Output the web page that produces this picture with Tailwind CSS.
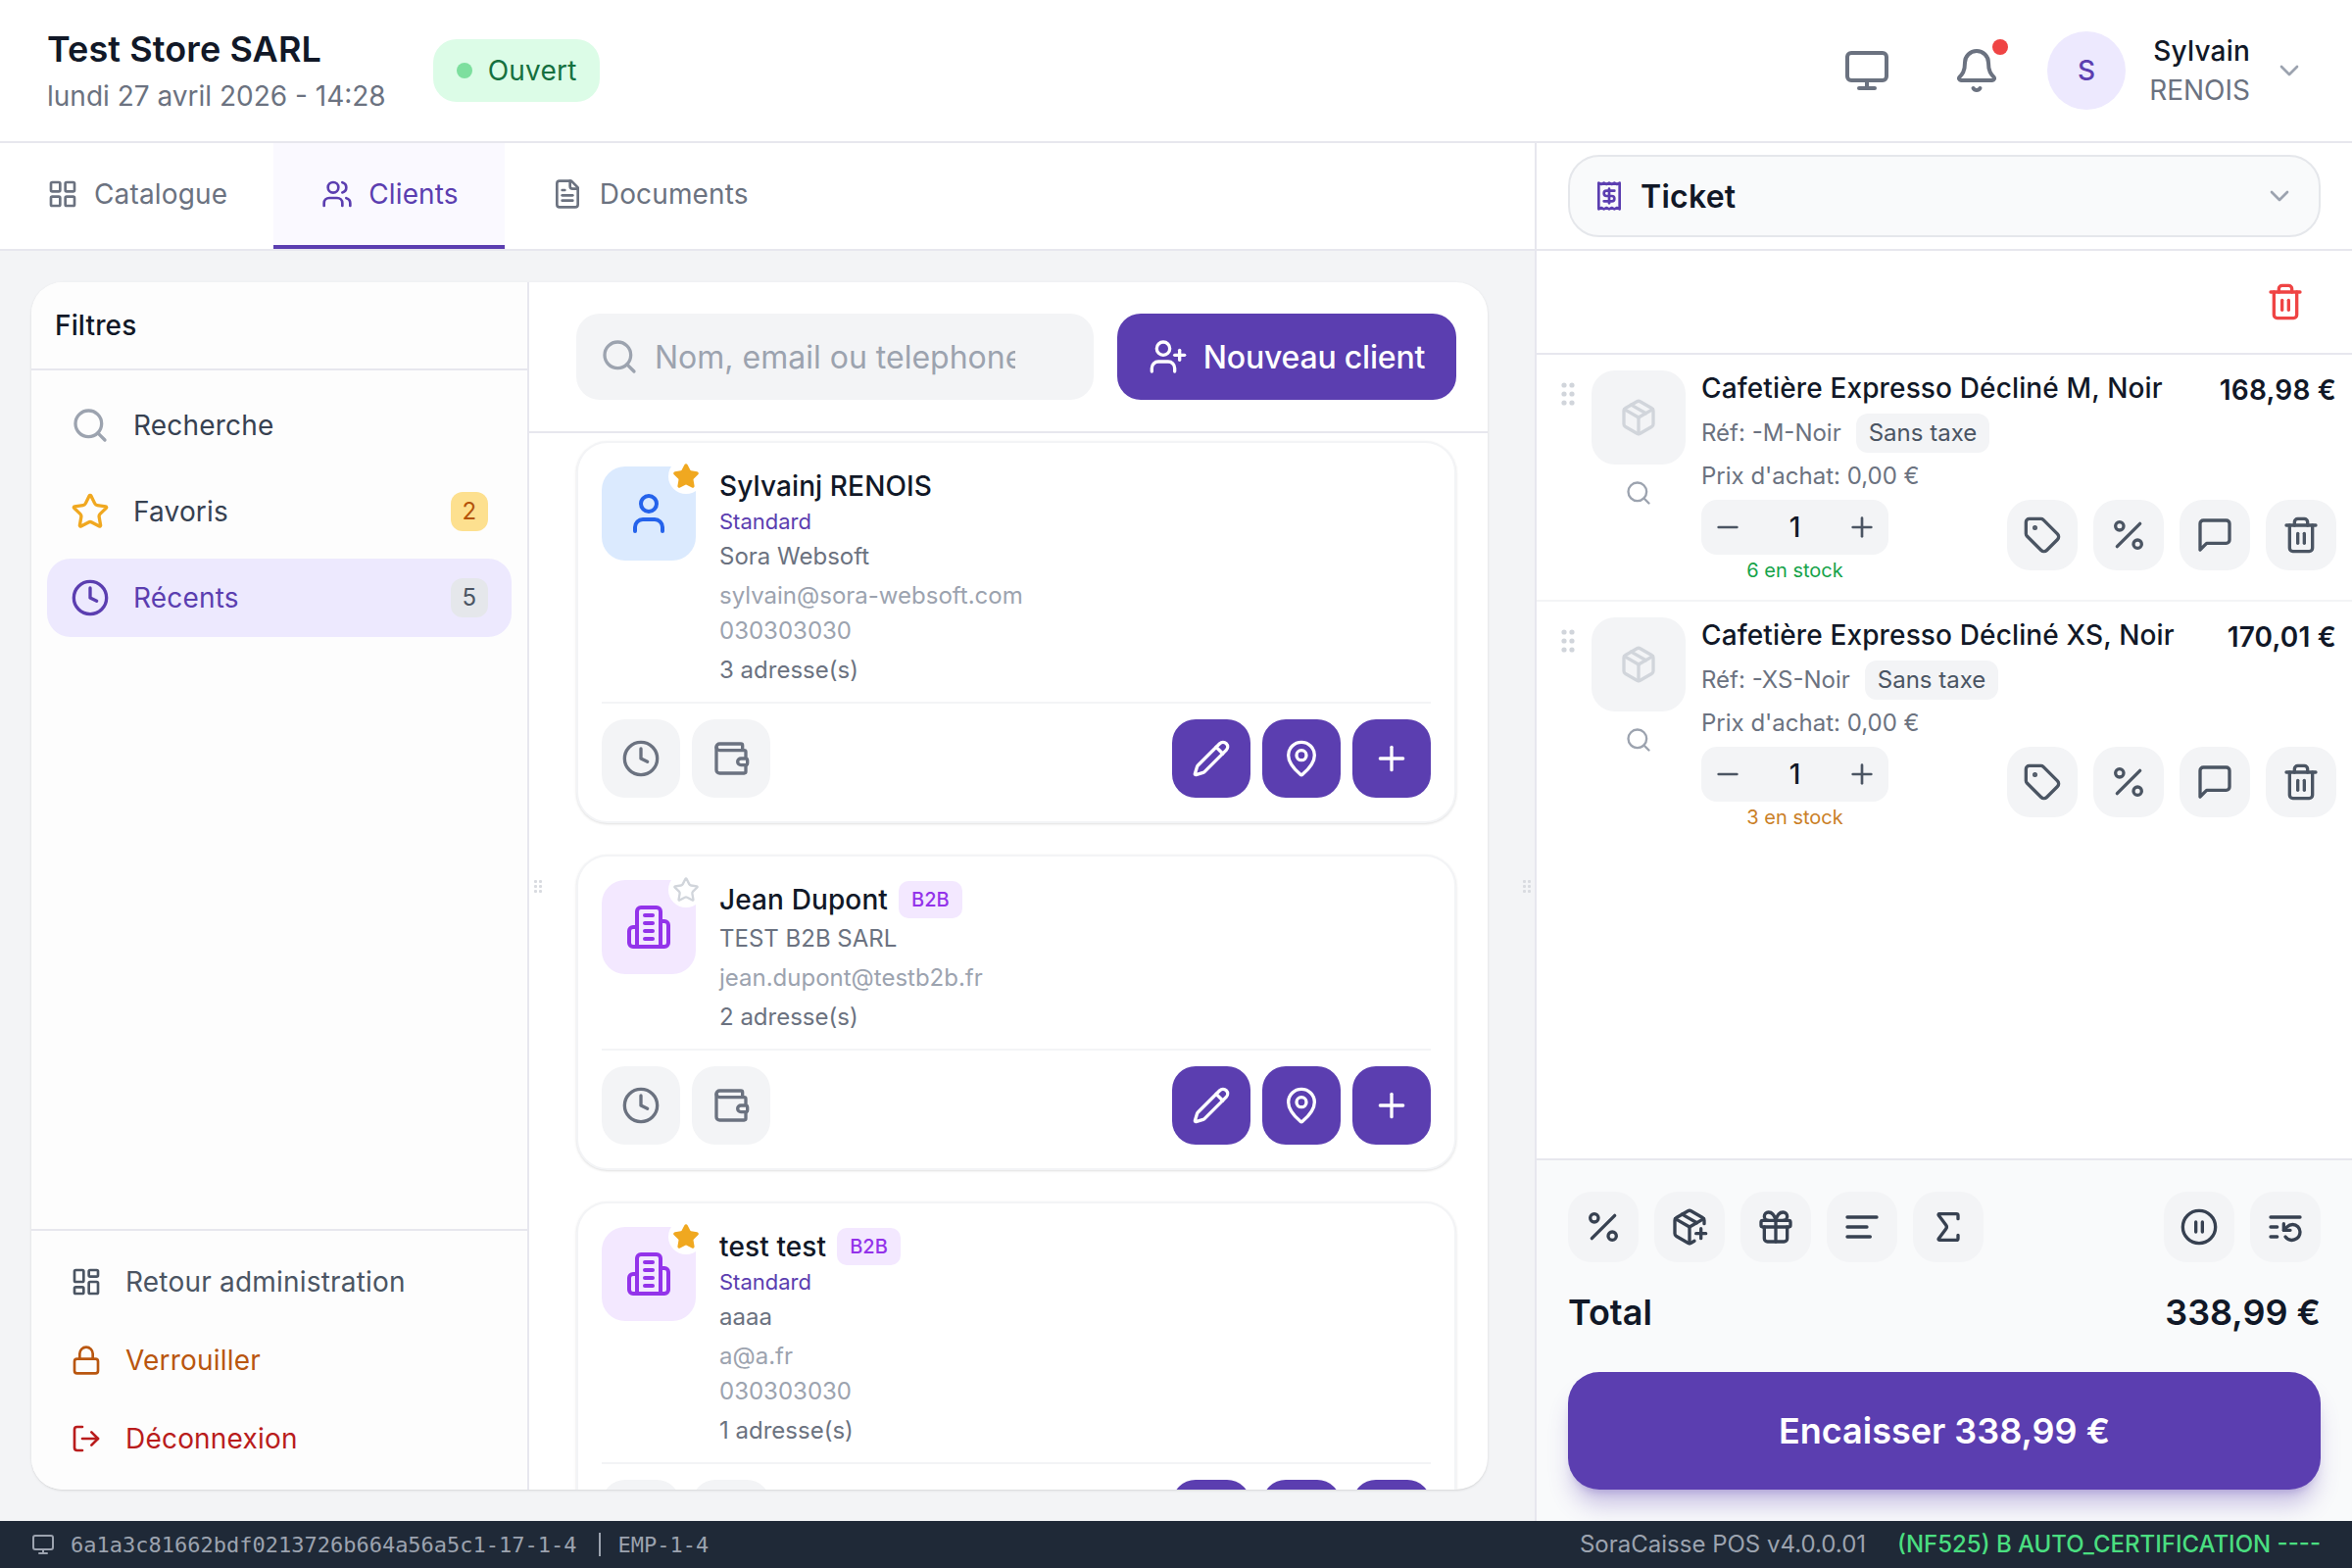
<!DOCTYPE html>
<html lang="fr">
<head>
    <meta charset="UTF-8">
    <title>SoraCaisse POS</title>
    <script src="https://cdn.jsdelivr.net/npm/@tailwindcss/browser@4"></script>
</head>
<body class="h-screen w-screen overflow-hidden flex flex-col bg-white text-[#111827] font-[family-name:Inter,sans-serif]">

    <!-- Icons -->
    <svg class="hidden">
        <symbol id="i-search" viewBox="0 0 24 24"><circle cx="11" cy="11" r="8"/><path d="m21 21-4.3-4.3"/></symbol>
        <symbol id="i-star" viewBox="0 0 24 24"><path d="M11.525 2.295a.53.53 0 0 1 .95 0l2.31 4.679a2.123 2.123 0 0 0 1.595 1.16l5.166.756a.53.53 0 0 1 .294.904l-3.736 3.638a2.123 2.123 0 0 0-.611 1.878l.882 5.14a.53.53 0 0 1-.771.56l-4.618-2.428a2.122 2.122 0 0 0-1.973 0L6.396 21.01a.53.53 0 0 1-.77-.56l.881-5.139a2.122 2.122 0 0 0-.611-1.879L2.16 9.795a.53.53 0 0 1 .294-.906l5.165-.755a2.122 2.122 0 0 0 1.597-1.16z"/></symbol>
        <symbol id="i-clock" viewBox="0 0 24 24"><circle cx="12" cy="12" r="10"/><polyline points="12 6 12 12 16 14"/></symbol>
        <symbol id="i-grid" viewBox="0 0 24 24"><rect width="7" height="7" x="3" y="3" rx="1"/><rect width="7" height="7" x="14" y="3" rx="1"/><rect width="7" height="7" x="14" y="14" rx="1"/><rect width="7" height="7" x="3" y="14" rx="1"/></symbol>
        <symbol id="i-dashboard" viewBox="0 0 24 24"><rect width="7" height="9" x="3" y="3" rx="1"/><rect width="7" height="5" x="14" y="3" rx="1"/><rect width="7" height="9" x="14" y="12" rx="1"/><rect width="7" height="5" x="3" y="16" rx="1"/></symbol>
        <symbol id="i-users" viewBox="0 0 24 24"><path d="M16 21v-2a4 4 0 0 0-4-4H6a4 4 0 0 0-4 4v2"/><path d="M16 3.128a4 4 0 0 1 0 7.744"/><path d="M22 21v-2a4 4 0 0 0-3-3.87"/><circle cx="9" cy="7" r="4"/></symbol>
        <symbol id="i-file" viewBox="0 0 24 24"><path d="M15 2H6a2 2 0 0 0-2 2v16a2 2 0 0 0 2 2h12a2 2 0 0 0 2-2V7Z"/><path d="M14 2v4a2 2 0 0 0 2 2h4"/><path d="M10 9H8"/><path d="M16 13H8"/><path d="M16 17H8"/></symbol>
        <symbol id="i-monitor" viewBox="0 0 24 24"><rect width="20" height="14" x="2" y="3" rx="2"/><line x1="8" x2="16" y1="21" y2="21"/><line x1="12" x2="12" y1="17" y2="21"/></symbol>
        <symbol id="i-bell" viewBox="0 0 24 24"><path d="M10.268 21a2 2 0 0 0 3.464 0"/><path d="M3.262 15.326A1 1 0 0 0 4 17h16a1 1 0 0 0 .74-1.673C19.41 13.956 18 12.499 18 8A6 6 0 0 0 6 8c0 4.499-1.411 5.956-2.738 7.326"/></symbol>
        <symbol id="i-chevron" viewBox="0 0 24 24"><path d="m6 9 6 6 6-6"/></symbol>
        <symbol id="i-receipt" viewBox="0 0 24 24"><path d="M4 2v20l2-1 2 1 2-1 2 1 2-1 2 1 2-1 2 1V2l-2 1-2-1-2 1-2-1-2 1-2-1-2 1Z"/><path d="M16 8h-6a2 2 0 1 0 0 4h4a2 2 0 1 1 0 4H8"/><path d="M12 17.5v-11"/></symbol>
        <symbol id="i-trash" viewBox="0 0 24 24"><path d="M10 11v6"/><path d="M14 11v6"/><path d="M19 6v14a2 2 0 0 1-2 2H7a2 2 0 0 1-2-2V6"/><path d="M3 6h18"/><path d="M8 6V4a2 2 0 0 1 2-2h4a2 2 0 0 1 2 2v2"/></symbol>
        <symbol id="i-package" viewBox="0 0 24 24"><path d="M11 21.73a2 2 0 0 0 2 0l7-4A2 2 0 0 0 21 16V8a2 2 0 0 0-1-1.73l-7-4a2 2 0 0 0-2 0l-7 4A2 2 0 0 0 3 8v8a2 2 0 0 0 1 1.73z"/><path d="M12 22V12"/><polyline points="3.29 7 12 12 20.71 7"/><path d="m7.5 4.27 9 5.15"/></symbol>
        <symbol id="i-package-plus" viewBox="0 0 24 24"><path d="M16 16h6"/><path d="M19 13v6"/><path d="M21 10V8a2 2 0 0 0-1-1.73l-7-4a2 2 0 0 0-2 0l-7 4A2 2 0 0 0 3 8v8a2 2 0 0 0 1 1.73l7 4a2 2 0 0 0 2 0l2-1.14"/><path d="m7.5 4.27 9 5.15"/><polyline points="3.29 7 12 12 20.71 7"/><line x1="12" x2="12" y1="22" y2="12"/></symbol>
        <symbol id="i-tag" viewBox="0 0 24 24"><path d="M12.586 2.586A2 2 0 0 0 11.172 2H4a2 2 0 0 0-2 2v7.172a2 2 0 0 0 .586 1.414l8.704 8.704a2.426 2.426 0 0 0 3.42 0l6.58-6.58a2.426 2.426 0 0 0 0-3.42z"/><circle cx="7.5" cy="7.5" r=".5" fill="currentColor"/></symbol>
        <symbol id="i-percent" viewBox="0 0 24 24"><line x1="19" x2="5" y1="5" y2="19"/><circle cx="6.5" cy="6.5" r="2.5"/><circle cx="17.5" cy="17.5" r="2.5"/></symbol>
        <symbol id="i-message" viewBox="0 0 24 24"><path d="M21 15a2 2 0 0 1-2 2H7l-4 4V5a2 2 0 0 1 2-2h14a2 2 0 0 1 2 2z"/></symbol>
        <symbol id="i-gift" viewBox="0 0 24 24"><rect x="3" y="8" width="18" height="4" rx="1"/><path d="M12 8v13"/><path d="M19 12v7a2 2 0 0 1-2 2H7a2 2 0 0 1-2-2v-7"/><path d="M7.5 8a2.5 2.5 0 0 1 0-5A4.8 8 0 0 1 12 8a4.8 8 0 0 1 4.5-5 2.5 2.5 0 0 1 0 5"/></symbol>
        <symbol id="i-align" viewBox="0 0 24 24"><path d="M15 12H3"/><path d="M17 18H3"/><path d="M21 6H3"/></symbol>
        <symbol id="i-sigma" viewBox="0 0 24 24"><path d="M18 7V5a1 1 0 0 0-1-1H6.5a.5.5 0 0 0-.4.8l4.5 6a2 2 0 0 1 0 2.4l-4.5 6a.5.5 0 0 0 .4.8H17a1 1 0 0 0 1-1v-2"/></symbol>
        <symbol id="i-pause" viewBox="0 0 24 24"><circle cx="12" cy="12" r="10"/><line x1="10" x2="10" y1="15" y2="9"/><line x1="14" x2="14" y1="15" y2="9"/></symbol>
        <symbol id="i-restart" viewBox="0 0 24 24"><path d="M21 6H3"/><path d="M7 12H3"/><path d="M7 18H3"/><path d="M12 18a5 5 0 0 0 9-3 4.5 4.5 0 0 0-4.5-4.5c-1.33 0-2.54.54-3.41 1.41L11 14"/><path d="M11 10v4h4"/></symbol>
        <symbol id="i-user-plus" viewBox="0 0 24 24"><path d="M16 21v-2a4 4 0 0 0-4-4H6a4 4 0 0 0-4 4v2"/><circle cx="9" cy="7" r="4"/><line x1="19" x2="19" y1="8" y2="14"/><line x1="22" x2="16" y1="11" y2="11"/></symbol>
        <symbol id="i-user" viewBox="0 0 24 24"><path d="M19 21v-2a4 4 0 0 0-4-4H9a4 4 0 0 0-4 4v2"/><circle cx="12" cy="7" r="4"/></symbol>
        <symbol id="i-building" viewBox="0 0 24 24"><path d="M6 22V4a2 2 0 0 1 2-2h8a2 2 0 0 1 2 2v18Z"/><path d="M6 12H4a2 2 0 0 0-2 2v6a2 2 0 0 0 2 2h2"/><path d="M18 9h2a2 2 0 0 1 2 2v9a2 2 0 0 1-2 2h-2"/><path d="M10 6h4"/><path d="M10 10h4"/><path d="M10 14h4"/><path d="M10 18h4"/></symbol>
        <symbol id="i-pencil" viewBox="0 0 24 24"><path d="M21.174 6.812a1 1 0 0 0-3.986-3.987L3.842 16.174a2 2 0 0 0-.5.83l-1.321 4.352a.5.5 0 0 0 .623.622l4.353-1.32a2 2 0 0 0 .83-.497z"/><path d="m15 5 4 4"/></symbol>
        <symbol id="i-pin" viewBox="0 0 24 24"><path d="M20 10c0 4.993-5.539 10.193-7.399 11.799a1 1 0 0 1-1.202 0C9.539 20.193 4 14.993 4 10a8 8 0 0 1 16 0"/><circle cx="12" cy="10" r="3"/></symbol>
        <symbol id="i-plus" viewBox="0 0 24 24"><path d="M5 12h14"/><path d="M12 5v14"/></symbol>
        <symbol id="i-minus" viewBox="0 0 24 24"><path d="M5 12h14"/></symbol>
        <symbol id="i-wallet" viewBox="0 0 24 24"><path d="M19 7V4a1 1 0 0 0-1-1H5a2 2 0 0 0 0 4h15a1 1 0 0 1 1 1v4h-3a2 2 0 0 0 0 4h3a1 1 0 0 0 1-1v-2a1 1 0 0 0-1-1"/><path d="M3 5v14a2 2 0 0 0 2 2h15a1 1 0 0 0 1-1v-4"/></symbol>
        <symbol id="i-lock" viewBox="0 0 24 24"><rect width="18" height="11" x="3" y="11" rx="2"/><path d="M7 11V7a5 5 0 0 1 10 0v4"/></symbol>
        <symbol id="i-logout" viewBox="0 0 24 24"><path d="M9 21H5a2 2 0 0 1-2-2V5a2 2 0 0 1 2-2h4"/><polyline points="16 17 21 12 16 7"/><line x1="21" x2="9" y1="12" y2="12"/></symbol>
        <symbol id="i-grip" viewBox="0 0 14 24"><circle cx="3" cy="3" r="2.6"/><circle cx="11" cy="3" r="2.6"/><circle cx="3" cy="12" r="2.6"/><circle cx="11" cy="12" r="2.6"/><circle cx="3" cy="21" r="2.6"/><circle cx="11" cy="21" r="2.6"/></symbol>
        <symbol id="i-handle" viewBox="0 0 8 14"><rect x="0" y="0" width="3" height="3" rx="1"/><rect x="5" y="0" width="3" height="3" rx="1"/><rect x="0" y="5" width="3" height="3" rx="1"/><rect x="5" y="5" width="3" height="3" rx="1"/><rect x="0" y="10" width="3" height="3" rx="1"/><rect x="5" y="10" width="3" height="3" rx="1"/></symbol>
    </svg>

    <!-- Header -->
    <header class="h-[146px] shrink-0 border-b-2 border-[#e7e7ee] flex items-center pl-[48px] pr-[48px]">
        <div>
            <h1 class="text-[36px] leading-[48px] font-semibold tracking-[0.1px]">Test Store SARL</h1>
            <p class="text-[28px] leading-[40px] text-[#6b7280] mt-[4px]">lundi 27 avril 2026 - 14:28</p>
        </div>
        <div class="ml-[48px] h-[64px] w-[170px] rounded-[24px] bg-[#dcfce7] flex items-center pl-[24px] gap-[16px]">
            <span class="w-[16px] h-[16px] rounded-full bg-[#7ddf9e]"></span>
            <span class="text-[28px] tracking-[0.2px] text-[#15703f]">Ouvert</span>
        </div>
        <div class="ml-auto flex items-center">
            <svg class="w-[48px] h-[48px] text-[#6b7280]" fill="none" stroke="currentColor" stroke-width="2" stroke-linecap="round" stroke-linejoin="round"><use href="#i-monitor"/></svg>
            <div class="relative ml-[64px]">
                <svg class="w-[48px] h-[48px] text-[#6b7280]" fill="none" stroke="currentColor" stroke-width="2" stroke-linecap="round" stroke-linejoin="round"><use href="#i-bell"/></svg>
                <span class="absolute top-[-8px] right-[-8px] w-[16px] h-[16px] rounded-full bg-[#ef4444]"></span>
            </div>
            <div class="ml-[48px] w-[80px] h-[80px] rounded-full bg-[#ede9fe] flex items-center justify-center text-[28px] font-medium text-[#5b3eb0]">S</div>
            <div class="ml-[24px] text-right">
                <p class="text-[28px] leading-[40px] font-medium tracking-[0.2px]">Sylvain</p>
                <p class="text-[28px] leading-[40px] text-[#6b7280]">RENOIS</p>
            </div>
            <svg class="ml-[24px] w-[32px] h-[32px] text-[#9ca3af]" fill="none" stroke="currentColor" stroke-width="2" stroke-linecap="round" stroke-linejoin="round"><use href="#i-chevron"/></svg>
        </div>
    </header>

    <main class="flex-1 flex min-h-0">

        <!-- Left area -->
        <div class="w-[1566px] flex flex-col min-h-0">
            <nav class="h-[110px] shrink-0 border-b-2 border-[#e7e7ee] flex">
                <a class="pl-[48px] pr-[47px] flex items-center gap-[16px] text-[28px] tracking-[0.15px] text-[#6b7280] border-b-4 border-transparent">
                    <svg class="w-[32px] h-[32px]" fill="none" stroke="currentColor" stroke-width="2" stroke-linecap="round" stroke-linejoin="round"><use href="#i-grid"/></svg>
                    Catalogue
                </a>
                <a class="pl-[49px] pr-[47px] flex items-center gap-[16px] text-[28px] tracking-[0.15px] text-[#5b3eb0] bg-[#faf9ff] border-b-4 border-[#5b3eb0]">
                    <svg class="w-[32px] h-[32px]" fill="none" stroke="currentColor" stroke-width="2" stroke-linecap="round" stroke-linejoin="round"><use href="#i-users"/></svg>
                    Clients
                </a>
                <a class="px-[48px] flex items-center gap-[17px] text-[28px] tracking-[0.15px] text-[#6b7280] border-b-4 border-transparent">
                    <svg class="w-[32px] h-[32px]" fill="none" stroke="currentColor" stroke-width="2" stroke-linecap="round" stroke-linejoin="round"><use href="#i-file"/></svg>
                    Documents
                </a>
            </nav>

            <div class="relative flex-1 min-h-0 bg-[#f3f4f6] pl-[32px] pr-[48px] py-[32px]">
                <div class="h-full flex bg-white rounded-[32px] overflow-hidden shadow-sm">

                    <!-- Filters -->
                    <aside class="w-[508px] shrink-0 bg-[#fdfdfd] border-r-2 border-[#e7e7ee] flex flex-col">
                        <div class="h-[90px] shrink-0 border-b-2 border-[#e7e7ee] flex items-center px-[24px] text-[28px] font-medium tracking-[0.15px]">Filtres</div>
                        <div class="flex-1 pt-[16px] px-[16px] flex flex-col gap-[8px]">
                            <div class="h-[80px] rounded-[24px] px-[24px] flex items-center gap-[24px] text-[28px] tracking-[0.18px] text-[#374151]">
                                <svg class="w-[40px] h-[40px] text-[#9ca3af]" fill="none" stroke="currentColor" stroke-width="2" stroke-linecap="round" stroke-linejoin="round"><use href="#i-search"/></svg>
                                Recherche
                            </div>
                            <div class="h-[80px] rounded-[24px] px-[24px] flex items-center gap-[24px] text-[28px] tracking-[0.18px] text-[#374151]">
                                <svg class="w-[40px] h-[40px] text-[#f0a820]" fill="none" stroke="currentColor" stroke-width="2" stroke-linecap="round" stroke-linejoin="round"><use href="#i-star"/></svg>
                                Favoris
                                <span class="ml-auto w-[38px] h-[40px] rounded-[12px] bg-[#fde08f] text-[#b45309] text-[24px] flex items-center justify-center">2</span>
                            </div>
                            <div class="h-[80px] rounded-[24px] px-[24px] flex items-center gap-[24px] text-[28px] tracking-[0.18px] bg-[#ede9fe] text-[#5b3eb0]">
                                <svg class="w-[40px] h-[40px]" fill="none" stroke="currentColor" stroke-width="2" stroke-linecap="round" stroke-linejoin="round"><use href="#i-clock"/></svg>
                                Récents
                                <span class="ml-auto w-[38px] h-[40px] rounded-[12px] bg-[#e5e7eb] text-[#4b5563] text-[24px] flex items-center justify-center">5</span>
                            </div>
                        </div>
                        <div class="shrink-0 border-t-2 border-[#e7e7ee] h-[266px] pt-[12px] px-[40px] flex flex-col text-[28px] tracking-[0.2px]">
                            <div class="h-[80px] flex items-center gap-[24px] text-[#4b5563]">
                                <svg class="w-[32px] h-[32px]" fill="none" stroke="currentColor" stroke-width="2" stroke-linecap="round" stroke-linejoin="round"><use href="#i-dashboard"/></svg>
                                Retour administration
                            </div>
                            <div class="h-[80px] flex items-center gap-[24px] text-[#b9560f]">
                                <svg class="w-[32px] h-[32px]" fill="none" stroke="currentColor" stroke-width="2" stroke-linecap="round" stroke-linejoin="round"><use href="#i-lock"/></svg>
                                Verrouiller
                            </div>
                            <div class="h-[80px] flex items-center gap-[24px] text-[#b91c1c]">
                                <svg class="w-[32px] h-[32px]" fill="none" stroke="currentColor" stroke-width="2" stroke-linecap="round" stroke-linejoin="round"><use href="#i-logout"/></svg>
                                Déconnexion
                            </div>
                        </div>
                    </aside>

                    <!-- Clients -->
                    <section class="flex-1 min-w-0 flex flex-col">
                        <div class="shrink-0 h-[154px] border-b-2 border-[#e7e7ee] pt-[32px] pl-[48px] pr-[32px] flex gap-[24px] items-start">
                            <div class="relative w-[528px] h-[88px]">
                                <svg class="absolute left-[24px] top-[24px] w-[40px] h-[40px] text-[#9ca3af]" fill="none" stroke="currentColor" stroke-width="2" stroke-linecap="round" stroke-linejoin="round"><use href="#i-search"/></svg>
                                <input type="text" placeholder="Nom, email ou telephone" class="w-full h-full rounded-[24px] bg-[#f3f4f6] pl-[80px] pr-[80px] text-[32px] placeholder:text-[#9ca3af] outline-none">
                            </div>
                            <button class="w-[346px] h-[88px] rounded-[24px] bg-[#5b3eb0] text-white text-[32px] font-medium tracking-[-0.2px] flex items-center justify-center gap-[16px]">
                                <svg class="w-[40px] h-[40px]" fill="none" stroke="currentColor" stroke-width="2" stroke-linecap="round" stroke-linejoin="round"><use href="#i-user-plus"/></svg>
                                <span class="mt-[1px]">Nouveau client</span>
                            </button>
                        </div>

                        <div class="flex-1 min-h-0 overflow-hidden pt-[8px] pl-[48px] pr-[32px] flex flex-col gap-[32px]">

                            <article class="shrink-0 border-2 border-[#f3f4f6] rounded-[32px] bg-white p-[24px] shadow-sm">
                                <div class="flex gap-[24px]">
                                    <div class="relative w-[96px] h-[96px] shrink-0 rounded-[24px] bg-[#dbeafe] flex items-center justify-center text-[#2563eb]">
                                        <svg class="w-[48px] h-[48px]" fill="none" stroke="currentColor" stroke-width="2" stroke-linecap="round" stroke-linejoin="round"><use href="#i-user"/></svg>
                                        <span class="absolute top-[-8px] right-[-8px] w-[36px] h-[36px] rounded-full bg-white flex items-center justify-center text-[#f0a820]">
                                            <svg class="w-[28px] h-[28px]" fill="currentColor" stroke="currentColor" stroke-width="2" stroke-linecap="round" stroke-linejoin="round"><use href="#i-star"/></svg>
                                        </span>
                                    </div>
                                    <div>
                                        <p class="text-[28px] leading-[40px] font-medium tracking-[0.12px]">Sylvainj RENOIS</p>
                                        <p class="text-[22px] leading-[32px] text-[#5b3eb0]">Standard</p>
                                        <p class="text-[24px] leading-[32px] text-[#6b7280] mt-[4px]">Sora Websoft</p>
                                        <p class="text-[24px] leading-[32px] text-[#9ca3af] mt-[8px]">sylvain@sora-websoft.com</p>
                                        <p class="text-[24px] leading-[32px] text-[#9ca3af] mt-[4px]">030303030</p>
                                        <p class="text-[24px] leading-[32px] text-[#6b7280] mt-[8px]">3 adresse(s)</p>
                                    </div>
                                </div>
                                <div class="border-t-2 border-[#f3f4f6] mt-[16px] pt-[16px] flex gap-[12px]">
                                    <button class="w-[80px] h-[80px] rounded-[24px] bg-[#f3f4f6] text-[#6b7280] flex items-center justify-center"><svg class="w-[40px] h-[40px]" fill="none" stroke="currentColor" stroke-width="2" stroke-linecap="round" stroke-linejoin="round"><use href="#i-clock"/></svg></button>
                                    <button class="w-[80px] h-[80px] rounded-[24px] bg-[#f3f4f6] text-[#6b7280] flex items-center justify-center"><svg class="w-[40px] h-[40px]" fill="none" stroke="currentColor" stroke-width="2" stroke-linecap="round" stroke-linejoin="round"><use href="#i-wallet"/></svg></button>
                                    <button class="ml-auto w-[80px] h-[80px] rounded-[24px] bg-[#5b3eb0] text-white flex items-center justify-center"><svg class="w-[40px] h-[40px]" fill="none" stroke="currentColor" stroke-width="2" stroke-linecap="round" stroke-linejoin="round"><use href="#i-pencil"/></svg></button>
                                    <button class="w-[80px] h-[80px] rounded-[24px] bg-[#5b3eb0] text-white flex items-center justify-center"><svg class="w-[40px] h-[40px]" fill="none" stroke="currentColor" stroke-width="2" stroke-linecap="round" stroke-linejoin="round"><use href="#i-pin"/></svg></button>
                                    <button class="w-[80px] h-[80px] rounded-[24px] bg-[#5b3eb0] text-white flex items-center justify-center"><svg class="w-[40px] h-[40px]" fill="none" stroke="currentColor" stroke-width="2" stroke-linecap="round" stroke-linejoin="round"><use href="#i-plus"/></svg></button>
                                </div>
                            </article>

                            <article class="shrink-0 border-2 border-[#f3f4f6] rounded-[32px] bg-white p-[24px] shadow-sm">
                                <div class="flex gap-[24px]">
                                    <div class="relative w-[96px] h-[96px] shrink-0 rounded-[24px] bg-[#f3e8ff] flex items-center justify-center text-[#9333ea]">
                                        <svg class="w-[48px] h-[48px]" fill="none" stroke="currentColor" stroke-width="2" stroke-linecap="round" stroke-linejoin="round"><use href="#i-building"/></svg>
                                        <span class="absolute top-[-8px] right-[-8px] w-[36px] h-[36px] rounded-full bg-white flex items-center justify-center text-[#d1d5db]">
                                            <svg class="w-[28px] h-[28px]" fill="none" stroke="currentColor" stroke-width="2" stroke-linecap="round" stroke-linejoin="round"><use href="#i-star"/></svg>
                                        </span>
                                    </div>
                                    <div>
                                        <div class="flex items-center gap-[11px]">
                                            <p class="text-[28px] leading-[40px] font-medium tracking-[0.12px]">Jean Dupont</p>
                                            <span class="h-[38px] px-[13px] rounded-[10px] bg-[#f3e8ff] text-[#9333ea] text-[20px] font-medium flex items-center">B2B</span>
                                        </div>
                                        <p class="text-[24px] leading-[32px] text-[#6b7280] mt-[4px]">TEST B2B SARL</p>
                                        <p class="text-[24px] leading-[32px] text-[#9ca3af] mt-[8px]">jean.dupont@testb2b.fr</p>
                                        <p class="text-[24px] leading-[32px] text-[#6b7280] mt-[8px]">2 adresse(s)</p>
                                    </div>
                                </div>
                                <div class="border-t-2 border-[#f3f4f6] mt-[16px] pt-[16px] flex gap-[12px]">
                                    <button class="w-[80px] h-[80px] rounded-[24px] bg-[#f3f4f6] text-[#6b7280] flex items-center justify-center"><svg class="w-[40px] h-[40px]" fill="none" stroke="currentColor" stroke-width="2" stroke-linecap="round" stroke-linejoin="round"><use href="#i-clock"/></svg></button>
                                    <button class="w-[80px] h-[80px] rounded-[24px] bg-[#f3f4f6] text-[#6b7280] flex items-center justify-center"><svg class="w-[40px] h-[40px]" fill="none" stroke="currentColor" stroke-width="2" stroke-linecap="round" stroke-linejoin="round"><use href="#i-wallet"/></svg></button>
                                    <button class="ml-auto w-[80px] h-[80px] rounded-[24px] bg-[#5b3eb0] text-white flex items-center justify-center"><svg class="w-[40px] h-[40px]" fill="none" stroke="currentColor" stroke-width="2" stroke-linecap="round" stroke-linejoin="round"><use href="#i-pencil"/></svg></button>
                                    <button class="w-[80px] h-[80px] rounded-[24px] bg-[#5b3eb0] text-white flex items-center justify-center"><svg class="w-[40px] h-[40px]" fill="none" stroke="currentColor" stroke-width="2" stroke-linecap="round" stroke-linejoin="round"><use href="#i-pin"/></svg></button>
                                    <button class="w-[80px] h-[80px] rounded-[24px] bg-[#5b3eb0] text-white flex items-center justify-center"><svg class="w-[40px] h-[40px]" fill="none" stroke="currentColor" stroke-width="2" stroke-linecap="round" stroke-linejoin="round"><use href="#i-plus"/></svg></button>
                                </div>
                            </article>

                            <article class="shrink-0 border-2 border-[#f3f4f6] rounded-[32px] bg-white p-[24px] shadow-sm">
                                <div class="flex gap-[24px]">
                                    <div class="relative w-[96px] h-[96px] shrink-0 rounded-[24px] bg-[#f3e8ff] flex items-center justify-center text-[#9333ea]">
                                        <svg class="w-[48px] h-[48px]" fill="none" stroke="currentColor" stroke-width="2" stroke-linecap="round" stroke-linejoin="round"><use href="#i-building"/></svg>
                                        <span class="absolute top-[-8px] right-[-8px] w-[36px] h-[36px] rounded-full bg-white flex items-center justify-center text-[#f0a820]">
                                            <svg class="w-[28px] h-[28px]" fill="currentColor" stroke="currentColor" stroke-width="2" stroke-linecap="round" stroke-linejoin="round"><use href="#i-star"/></svg>
                                        </span>
                                    </div>
                                    <div>
                                        <div class="flex items-center gap-[11px]">
                                            <p class="text-[28px] leading-[40px] font-medium tracking-[0.12px]">test test</p>
                                            <span class="h-[38px] px-[13px] rounded-[10px] bg-[#f3e8ff] text-[#9333ea] text-[20px] font-medium flex items-center">B2B</span>
                                        </div>
                                        <p class="text-[22px] leading-[32px] text-[#5b3eb0]">Standard</p>
                                        <p class="text-[24px] leading-[32px] text-[#6b7280] mt-[4px]">aaaa</p>
                                        <p class="text-[24px] leading-[32px] text-[#9ca3af] mt-[8px]">a@a.fr</p>
                                        <p class="text-[24px] leading-[32px] text-[#9ca3af] mt-[4px]">030303030</p>
                                        <p class="text-[24px] leading-[32px] text-[#6b7280] mt-[8px]">1 adresse(s)</p>
                                    </div>
                                </div>
                                <div class="border-t-2 border-[#f3f4f6] mt-[16px] pt-[16px] flex gap-[12px]">
                                    <button class="w-[80px] h-[80px] rounded-[24px] bg-[#f3f4f6] text-[#6b7280] flex items-center justify-center"><svg class="w-[40px] h-[40px]" fill="none" stroke="currentColor" stroke-width="2" stroke-linecap="round" stroke-linejoin="round"><use href="#i-clock"/></svg></button>
                                    <button class="w-[80px] h-[80px] rounded-[24px] bg-[#f3f4f6] text-[#6b7280] flex items-center justify-center"><svg class="w-[40px] h-[40px]" fill="none" stroke="currentColor" stroke-width="2" stroke-linecap="round" stroke-linejoin="round"><use href="#i-wallet"/></svg></button>
                                    <button class="ml-auto w-[80px] h-[80px] rounded-[24px] bg-[#5b3eb0] text-white flex items-center justify-center"><svg class="w-[40px] h-[40px]" fill="none" stroke="currentColor" stroke-width="2" stroke-linecap="round" stroke-linejoin="round"><use href="#i-pencil"/></svg></button>
                                    <button class="w-[80px] h-[80px] rounded-[24px] bg-[#5b3eb0] text-white flex items-center justify-center"><svg class="w-[40px] h-[40px]" fill="none" stroke="currentColor" stroke-width="2" stroke-linecap="round" stroke-linejoin="round"><use href="#i-pin"/></svg></button>
                                    <button class="w-[80px] h-[80px] rounded-[24px] bg-[#5b3eb0] text-white flex items-center justify-center"><svg class="w-[40px] h-[40px]" fill="none" stroke="currentColor" stroke-width="2" stroke-linecap="round" stroke-linejoin="round"><use href="#i-plus"/></svg></button>
                                </div>
                            </article>
                        </div>
                    </section>
                </div>

                <!-- Resize handles -->
                <svg class="absolute left-[545px] top-[642px] w-[8px] h-[14px] text-[#d9dbe0]" fill="currentColor"><use href="#i-handle"/></svg>
                <svg class="absolute left-[1554px] top-[642px] w-[8px] h-[14px] text-[#d9dbe0]" fill="currentColor"><use href="#i-handle"/></svg>
            </div>
        </div>

        <!-- Ticket -->
        <div class="flex-1 min-w-0 border-l-2 border-[#e7e7ee] flex flex-col bg-white">
            <div class="h-[110px] shrink-0 border-b-2 border-[#e7e7ee] pt-[12px] px-[32px]">
                <div class="h-[84px] rounded-[32px] border-2 border-[#e5e7eb] bg-[#f9fafb] px-[24px] flex items-center gap-[16px]">
                    <svg class="w-[32px] h-[32px] text-[#5b3eb0]" fill="none" stroke="currentColor" stroke-width="2" stroke-linecap="round" stroke-linejoin="round"><use href="#i-receipt"/></svg>
                    <span class="mt-[2px] text-[32px] font-semibold tracking-[0.25px]">Ticket</span>
                    <svg class="ml-auto w-[32px] h-[32px] text-[#9ca3af]" fill="none" stroke="currentColor" stroke-width="2" stroke-linecap="round" stroke-linejoin="round"><use href="#i-chevron"/></svg>
                </div>
            </div>
            <div class="h-[106px] shrink-0 border-b-2 border-[#e7e7ee] flex items-center justify-end pr-[48px] text-[#ef4444]">
                <svg class="w-[40px] h-[40px]" fill="none" stroke="currentColor" stroke-width="2" stroke-linecap="round" stroke-linejoin="round"><use href="#i-trash"/></svg>
            </div>

            <div class="flex-1 min-h-0">
                <div class="h-[252px] border-b-2 border-[#f3f4f6] pt-[16px] pl-[25px] pr-[16px] flex">
                    <svg class="w-[14px] h-[24px] mt-[12px] text-[#d1d5db]" fill="currentColor"><use href="#i-grip"/></svg>
                    <div class="ml-[17px] w-[96px] shrink-0 flex flex-col items-center">
                        <div class="w-[96px] h-[96px] rounded-[24px] bg-[#f3f4f6] flex items-center justify-center text-[#d1d5db]">
                            <svg class="w-[40px] h-[40px]" fill="none" stroke="currentColor" stroke-width="2" stroke-linecap="round" stroke-linejoin="round"><use href="#i-package"/></svg>
                        </div>
                        <svg class="mt-[15px] w-[28px] h-[28px] text-[#9ca3af]" fill="none" stroke="currentColor" stroke-width="2" stroke-linecap="round" stroke-linejoin="round"><use href="#i-search"/></svg>
                    </div>
                    <div class="ml-[16px] flex-1 min-w-0">
                        <div class="flex justify-between text-[28px] h-[40px] leading-[40px]">
                            <span class="font-medium tracking-[0.14px] leading-[37px]">Cafetière Expresso Décliné M, Noir</span>
                            <span class="font-semibold tracking-[0.2px]">168,98 €</span>
                        </div>
                        <div class="mt-[4px] flex items-center gap-[15px] text-[24px]">
                            <span class="text-[#6b7280]">Réf: -M-Noir</span>
                            <span class="h-[40px] px-[13px] rounded-[12px] bg-[#f3f4f6] text-[#4b5563] flex items-center">Sans taxe</span>
                        </div>
                        <p class="mt-[8px] text-[24px] leading-[32px] text-[#6b7280]">Prix d'achat: 0,00 €</p>
                        <div class="mt-[8px] flex items-start justify-between">
                            <div class="w-[191px]">
                                <div class="h-[56px] rounded-[16px] bg-[#f3f4f6] flex items-center justify-between px-[11px] text-[#4b5563]">
                                    <svg class="w-[32px] h-[32px]" fill="none" stroke="currentColor" stroke-width="2" stroke-linecap="round" stroke-linejoin="round"><use href="#i-minus"/></svg>
                                    <span class="text-[28px] font-medium text-[#111827]">1</span>
                                    <svg class="w-[32px] h-[32px]" fill="none" stroke="currentColor" stroke-width="2" stroke-linecap="round" stroke-linejoin="round"><use href="#i-plus"/></svg>
                                </div>
                                <p class="mt-[2px] text-center text-[20px] leading-[28px] text-[#16a34a]">6 en stock</p>
                            </div>
                            <div class="flex gap-[16px] text-[#4b5563]">
                                <button class="w-[72px] h-[72px] rounded-[24px] bg-[#f3f4f6] flex items-center justify-center"><svg class="w-[40px] h-[40px]" fill="none" stroke="currentColor" stroke-width="2" stroke-linecap="round" stroke-linejoin="round"><use href="#i-tag"/></svg></button>
                                <button class="w-[72px] h-[72px] rounded-[24px] bg-[#f3f4f6] flex items-center justify-center"><svg class="w-[40px] h-[40px]" fill="none" stroke="currentColor" stroke-width="2" stroke-linecap="round" stroke-linejoin="round"><use href="#i-percent"/></svg></button>
                                <button class="w-[72px] h-[72px] rounded-[24px] bg-[#f3f4f6] flex items-center justify-center"><svg class="w-[40px] h-[40px]" fill="none" stroke="currentColor" stroke-width="2" stroke-linecap="round" stroke-linejoin="round"><use href="#i-message"/></svg></button>
                                <button class="w-[72px] h-[72px] rounded-[24px] bg-[#f3f4f6] flex items-center justify-center"><svg class="w-[40px] h-[40px]" fill="none" stroke="currentColor" stroke-width="2" stroke-linecap="round" stroke-linejoin="round"><use href="#i-trash"/></svg></button>
                            </div>
                        </div>
                    </div>
                </div>

                <div class="h-[252px] pt-[16px] pl-[25px] pr-[16px] flex">
                    <svg class="w-[14px] h-[24px] mt-[12px] text-[#d1d5db]" fill="currentColor"><use href="#i-grip"/></svg>
                    <div class="ml-[17px] w-[96px] shrink-0 flex flex-col items-center">
                        <div class="w-[96px] h-[96px] rounded-[24px] bg-[#f3f4f6] flex items-center justify-center text-[#d1d5db]">
                            <svg class="w-[40px] h-[40px]" fill="none" stroke="currentColor" stroke-width="2" stroke-linecap="round" stroke-linejoin="round"><use href="#i-package"/></svg>
                        </div>
                        <svg class="mt-[15px] w-[28px] h-[28px] text-[#9ca3af]" fill="none" stroke="currentColor" stroke-width="2" stroke-linecap="round" stroke-linejoin="round"><use href="#i-search"/></svg>
                    </div>
                    <div class="ml-[16px] flex-1 min-w-0">
                        <div class="flex justify-between text-[28px] h-[40px] leading-[40px]">
                            <span class="font-medium tracking-[0.14px] leading-[37px]">Cafetière Expresso Décliné XS, Noir</span>
                            <span class="font-semibold tracking-[0.2px]">170,01 €</span>
                        </div>
                        <div class="mt-[4px] flex items-center gap-[15px] text-[24px]">
                            <span class="text-[#6b7280]">Réf: -XS-Noir</span>
                            <span class="h-[40px] px-[13px] rounded-[12px] bg-[#f3f4f6] text-[#4b5563] flex items-center">Sans taxe</span>
                        </div>
                        <p class="mt-[8px] text-[24px] leading-[32px] text-[#6b7280]">Prix d'achat: 0,00 €</p>
                        <div class="mt-[8px] flex items-start justify-between">
                            <div class="w-[191px]">
                                <div class="h-[56px] rounded-[16px] bg-[#f3f4f6] flex items-center justify-between px-[11px] text-[#4b5563]">
                                    <svg class="w-[32px] h-[32px]" fill="none" stroke="currentColor" stroke-width="2" stroke-linecap="round" stroke-linejoin="round"><use href="#i-minus"/></svg>
                                    <span class="text-[28px] font-medium text-[#111827]">1</span>
                                    <svg class="w-[32px] h-[32px]" fill="none" stroke="currentColor" stroke-width="2" stroke-linecap="round" stroke-linejoin="round"><use href="#i-plus"/></svg>
                                </div>
                                <p class="mt-[2px] text-center text-[20px] leading-[28px] text-[#ca8027]">3 en stock</p>
                            </div>
                            <div class="flex gap-[16px] text-[#4b5563]">
                                <button class="w-[72px] h-[72px] rounded-[24px] bg-[#f3f4f6] flex items-center justify-center"><svg class="w-[40px] h-[40px]" fill="none" stroke="currentColor" stroke-width="2" stroke-linecap="round" stroke-linejoin="round"><use href="#i-tag"/></svg></button>
                                <button class="w-[72px] h-[72px] rounded-[24px] bg-[#f3f4f6] flex items-center justify-center"><svg class="w-[40px] h-[40px]" fill="none" stroke="currentColor" stroke-width="2" stroke-linecap="round" stroke-linejoin="round"><use href="#i-percent"/></svg></button>
                                <button class="w-[72px] h-[72px] rounded-[24px] bg-[#f3f4f6] flex items-center justify-center"><svg class="w-[40px] h-[40px]" fill="none" stroke="currentColor" stroke-width="2" stroke-linecap="round" stroke-linejoin="round"><use href="#i-message"/></svg></button>
                                <button class="w-[72px] h-[72px] rounded-[24px] bg-[#f3f4f6] flex items-center justify-center"><svg class="w-[40px] h-[40px]" fill="none" stroke="currentColor" stroke-width="2" stroke-linecap="round" stroke-linejoin="round"><use href="#i-trash"/></svg></button>
                            </div>
                        </div>
                    </div>
                </div>
            </div>

            <!-- Totals -->
            <div class="shrink-0 border-t-2 border-[#e7e7ee] bg-[#f9fafb] p-[32px]">
                <div class="flex gap-[16px] text-[#374151]">
                    <button class="w-[72px] h-[72px] rounded-[24px] bg-[#f3f4f6] flex items-center justify-center"><svg class="w-[40px] h-[40px]" fill="none" stroke="currentColor" stroke-width="2" stroke-linecap="round" stroke-linejoin="round"><use href="#i-percent"/></svg></button>
                    <button class="w-[72px] h-[72px] rounded-[24px] bg-[#f3f4f6] flex items-center justify-center"><svg class="w-[40px] h-[40px]" fill="none" stroke="currentColor" stroke-width="2" stroke-linecap="round" stroke-linejoin="round"><use href="#i-package-plus"/></svg></button>
                    <button class="w-[72px] h-[72px] rounded-[24px] bg-[#f3f4f6] flex items-center justify-center"><svg class="w-[40px] h-[40px]" fill="none" stroke="currentColor" stroke-width="2" stroke-linecap="round" stroke-linejoin="round"><use href="#i-gift"/></svg></button>
                    <button class="w-[72px] h-[72px] rounded-[24px] bg-[#f3f4f6] flex items-center justify-center"><svg class="w-[40px] h-[40px]" fill="none" stroke="currentColor" stroke-width="2" stroke-linecap="round" stroke-linejoin="round"><use href="#i-align"/></svg></button>
                    <button class="w-[72px] h-[72px] rounded-[24px] bg-[#f3f4f6] flex items-center justify-center"><svg class="w-[40px] h-[40px]" fill="none" stroke="currentColor" stroke-width="2" stroke-linecap="round" stroke-linejoin="round"><use href="#i-sigma"/></svg></button>
                    <button class="ml-auto w-[72px] h-[72px] rounded-[24px] bg-[#f3f4f6] flex items-center justify-center"><svg class="w-[40px] h-[40px]" fill="none" stroke="currentColor" stroke-width="2" stroke-linecap="round" stroke-linejoin="round"><use href="#i-pause"/></svg></button>
                    <button class="w-[72px] h-[72px] rounded-[24px] bg-[#f3f4f6] flex items-center justify-center"><svg class="w-[40px] h-[40px]" fill="none" stroke="currentColor" stroke-width="2" stroke-linecap="round" stroke-linejoin="round"><use href="#i-restart"/></svg></button>
                </div>
                <div class="mt-[27px] flex justify-between text-[36px] leading-[48px] font-semibold">
                    <span>Total</span>
                    <span>338,99 €</span>
                </div>
                <button class="mt-[37px] w-full h-[120px] rounded-[32px] bg-[#5b3eb0] text-white text-[36px] font-semibold shadow-[0_20px_25px_-5px_rgba(91,62,176,0.3),0_8px_10px_-6px_rgba(91,62,176,0.3)]">Encaisser 338,99 €</button>
            </div>
        </div>
    </main>

    <!-- Status bar -->
    <footer class="h-[48px] shrink-0 bg-[#1f2937] flex items-center pl-[32px] pr-[32px] text-[#9ca3af]">
        <svg class="w-[24px] h-[24px]" fill="none" stroke="currentColor" stroke-width="2" stroke-linecap="round" stroke-linejoin="round"><use href="#i-monitor"/></svg>
        <span class="ml-[16px] text-[22px] font-[family-name:'DejaVu_Sans_Mono',monospace]">6a1a3c81662bdf0213726b664a56a5c1-17-1-4</span>
        <span class="ml-[22px] w-[2px] h-[24px] bg-[#9ca3af]"></span>
        <span class="ml-[18px] text-[22px] font-[family-name:'DejaVu_Sans_Mono',monospace]">EMP-1-4</span>
        <span class="ml-auto text-[24px]">SoraCaisse POS v4.0.0.01</span>
        <span class="ml-[32px] text-[24px] font-medium text-[#4ade80]">(NF525) B AUTO_CERTIFICATION ----</span>
    </footer>
</body>
</html>
